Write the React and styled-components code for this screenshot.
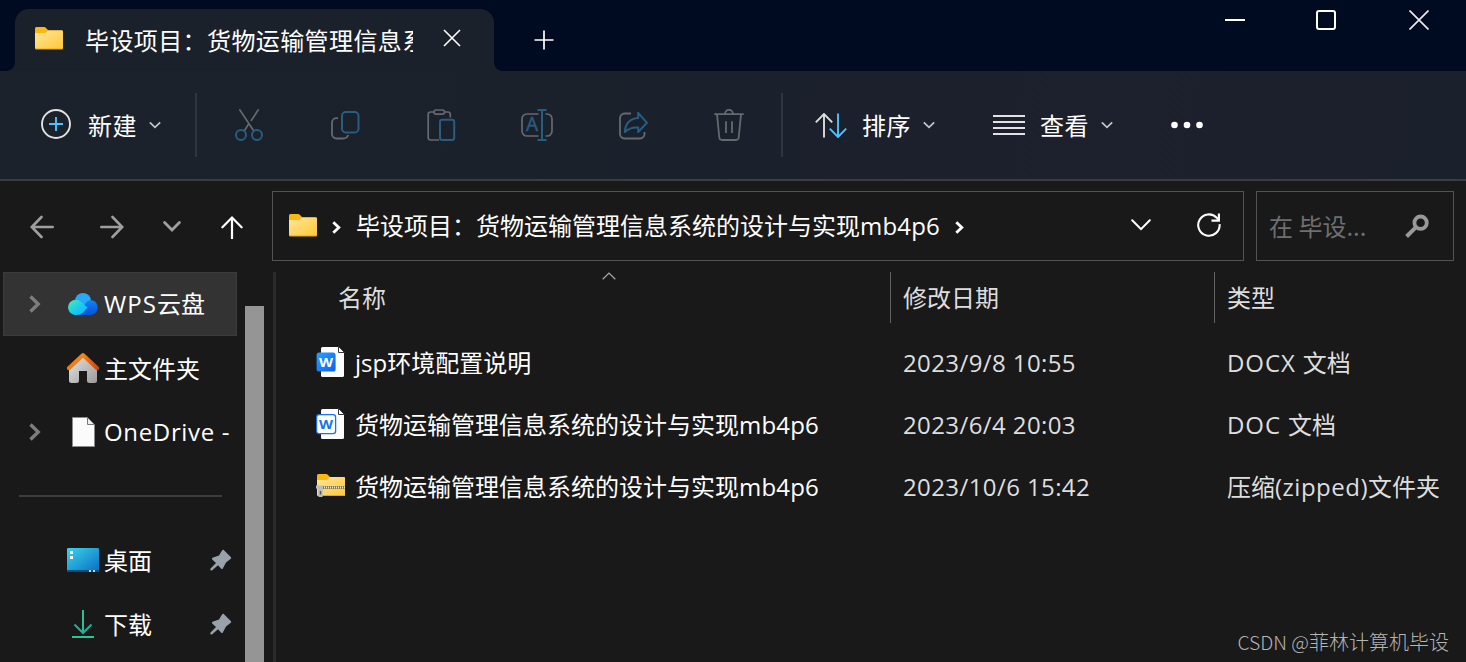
import styled, { createGlobalStyle } from "styled-components";

const places = [
  { label: "云盘", latin: "WPS", icon: "cloud", expandable: true, selected: true },
  { label: "主文件夹", icon: "home" },
  { latin: "OneDrive -", icon: "file", expandable: true },
];

const pinned = [
  { label: "桌面", icon: "desktop" },
  { label: "下载", icon: "download" },
];

const files = [
  { pre: "jsp", name: "环境配置说明", date: "2023/9/8 10:55", typeLatin: "DOCX", type: "文档", icon: "docx" },
  { name: "货物运输管理信息系统的设计与实现", post: "mb4p6", date: "2023/6/4 20:03", typeLatin: "DOC", type: "文档", icon: "doc" },
  { name: "货物运输管理信息系统的设计与实现", post: "mb4p6", date: "2023/10/6 15:42", zip: true, icon: "zip" },
];

export default function App() {
  return (
    <Window>
      <GlobalStyle />
      <TitleBar>
        <Tab>
          <FolderIcon />
          <TabTitle>毕设项目：货物运输管理信息系</TabTitle>
          <Svg width="18" height="18" stroke="#fff" strokeWidth="1.6">
            <path d="M1 1 17 17M17 1 1 17" />
          </Svg>
        </Tab>
        <NewTab>
          <Svg width="20" height="20" stroke="#fff" strokeWidth="1.7">
            <path d="M10 .5V19.5M.5 10H19.5" />
          </Svg>
        </NewTab>
        <WindowButtons>
          <Svg width="20" height="20" stroke="#fff" strokeWidth="2">
            <path d="M0 10H20" />
          </Svg>
          <Svg width="20" height="20" stroke="#fff" strokeWidth="2">
            <rect x="1" y="1" width="18" height="18" rx="2" />
          </Svg>
          <Svg width="20" height="20" stroke="#e8e8ee" strokeWidth="1.7">
            <path d="M.5 .5 19.5 19.5M19.5 .5.5 19.5" />
          </Svg>
        </WindowButtons>
      </TitleBar>

      <CommandBar>
        <MenuButton $left={41}>
          <Svg width="30" height="32" strokeWidth="1.9">
            <circle cx="15" cy="15" r="14" stroke="#e2e2e2" />
            <path d="M15 8V22M8 15H22" stroke="#4cc2ff" />
          </Svg>
          <MenuLabel $gap={17}>新建</MenuLabel>
          <SmallChevron />
        </MenuButton>
        <Divider $left={34} />
        <Actions>
          <Action><CutIcon /></Action>
          <Action><CopyIcon /></Action>
          <Action><PasteIcon /></Action>
          <Action><RenameIcon /></Action>
          <Action><ShareIcon /></Action>
          <Action><DeleteIcon /></Action>
        </Actions>
        <Divider $left={4} />
        <MenuButton $left={32}>
          <Svg width="33" height="25" strokeWidth="1.9">
            <path d="M9 24.5V1M.8 9.3 9 1l8.2 8.3" stroke="#dcdcdc" />
            <path d="M23 .5V24M14.8 15.7 23 24l8.2-8.3" stroke="#4cc2ff" />
          </Svg>
          <MenuLabel $gap={14}>排序</MenuLabel>
          <SmallChevron />
        </MenuButton>
        <MenuButton $left={58}>
          <Svg width="32" height="20" stroke="#e2e2e2" strokeWidth="2">
            <path d="M0 1H32M0 7H32M0 13H32M0 19H32" />
          </Svg>
          <MenuLabel $gap={15}>查看</MenuLabel>
          <SmallChevron />
        </MenuButton>
        <MenuButton $left={58}>
          <Svg width="33" height="8" fill="#fff">
            <circle cx="3.5" cy="4" r="3.3" />
            <circle cx="16" cy="4" r="3.3" />
            <circle cx="28.5" cy="4" r="3.3" />
          </Svg>
        </MenuButton>
      </CommandBar>

      <NavBar>
        <NavButtons>
          <Svg width="24" height="24" stroke="#9f9f9f" strokeWidth="2.6" strokeLinecap="round">
            <path d="M22.7 12H2M11.5 2 1.8 12l9.7 10" />
          </Svg>
          <Svg width="24" height="24" stroke="#9f9f9f" strokeWidth="2.6" strokeLinecap="round">
            <path d="M1.3 12H22M12.5 2l9.7 10-9.7 10" />
          </Svg>
          <Svg width="18" height="24" stroke="#9f9f9f" strokeWidth="2.8" strokeLinecap="round">
            <path d="M1.6 7.6 9 15l7.4-7.4" />
          </Svg>
          <Svg width="22" height="24" stroke="#fff" strokeWidth="2.2" strokeLinecap="round">
            <path d="M11 23.5V2.5M1.4 12.3 11 2.5l9.6 9.8" />
          </Svg>
        </NavButtons>
        <AddressBar>
          <FolderIcon />
          <CrumbChevron />
          <Crumb>
            毕设项目：货物运输管理信息系统的设计与实现<Latin $spacing={0.2}>mb4p6</Latin>
          </Crumb>
          <CrumbChevron />
          <AddressActions>
            <Svg width="20" height="12" stroke="#fff" strokeWidth="2" strokeLinecap="round">
              <path d="M1.2 1.3 10 10.2l8.8-8.9" />
            </Svg>
            <Svg width="24" height="24" stroke="#fff" strokeWidth="2.1">
              <path d="M22.6 11.2A10.7 10.7 0 1 1 19.8 4.8L22 7.3" />
              <path d="M21.9 .5V7.6H14.5" />
            </Svg>
          </AddressActions>
        </AddressBar>
        <SearchBox>
          <span>在 毕设...</span>
          <Svg width="24" height="24" stroke="#999" strokeWidth="3.8">
            <circle cx="15.6" cy="8.7" r="6.2" />
            <path d="M11 13.1 1.6 22.5" strokeWidth="4" />
          </Svg>
        </SearchBox>
      </NavBar>

      <Body>
        <Sidebar>
          {places.map((place) => (
            <Place key={place.icon} $selected={place.selected}>
              <Expander>{place.expandable && <PlaceChevron />}</Expander>
              <PlaceIcon name={place.icon} />
              <PlaceLabel>
                {place.latin && <Latin $spacing={place.label ? 1.1 : 0.65}>{place.latin}</Latin>}
                {place.label}
              </PlaceLabel>
            </Place>
          ))}
          <Separator />
          {pinned.map((place) => (
            <Place key={place.icon}>
              <Expander />
              <PlaceIcon name={place.icon} />
              <PlaceLabel>{place.label}</PlaceLabel>
              <PinIcon />
            </Place>
          ))}
        </Sidebar>
        <ScrollTrack>
          <ScrollThumb />
        </ScrollTrack>
        <Splitter />

        <Content>
          <HeaderRow>
            <HeaderCell $pad={62}>
              名称
              <SortMark>
                <Svg width="14" height="8" stroke="#aaa" strokeWidth="1.2">
                  <path d="M.7 7.2 7 1l6.3 6.2" />
                </Svg>
              </SortMark>
            </HeaderCell>
            <HeaderCell $pad={12}>修改日期</HeaderCell>
            <HeaderCell $pad={12}>类型</HeaderCell>
          </HeaderRow>
          {files.map((file) => (
            <FileRow key={file.icon}>
              <FileName>
                <FileIcon name={file.icon} />
                <span>
                  {file.pre && <Latin>{file.pre}</Latin>}
                  {file.name}
                  {file.post && <Latin $spacing={0.2}>{file.post}</Latin>}
                </span>
              </FileName>
              <FileMeta>
                <Latin $spacing={0.4}>{file.date}</Latin>
              </FileMeta>
              <FileMeta>
                {file.zip ? (
                  <>
                    压缩<Latin $spacing={0.5}>(zipped)</Latin>文件夹
                  </>
                ) : (
                  <>
                    <Latin $spacing={0.9}>{file.typeLatin} </Latin>
                    {file.type}
                  </>
                )}
              </FileMeta>
            </FileRow>
          ))}
        </Content>
      </Body>
      <Watermark>
        <small>CSDN @</small>菲林计算机毕设
      </Watermark>
    </Window>
  );
}

function FolderIcon() {
  return (
    <Svg width="28" height="23">
      <defs>
        <linearGradient id="folder" x1="0" y1="0" x2="1" y2="1">
          <stop offset="0" stopColor="#ffe69b" />
          <stop offset="1" stopColor="#ffc937" />
        </linearGradient>
      </defs>
      <path d="M0 1.5Q0 0 1.5 0H9q1.2 0 2 1L13.5 3.5H26.5Q28 3.5 28 5V12H0Z" fill="#fcb613" />
      <path d="M0 6H10L13 3.5H26.8Q28 3.5 28 4.7V21.3Q28 22.5 26.8 22.5H1.2Q0 22.5 0 21.3Z" fill="#e5a31a" />
      <path d="M0 6H10L13 3.5H26.8Q28 3.5 28 4.7V20.3Q28 21.5 26.8 21.5H1.2Q0 21.5 0 20.3Z" fill="url(#folder)" />
    </Svg>
  );
}

function SmallChevron() {
  return (
    <Svg width="12" height="8" stroke="#c4c6ca" strokeWidth="1.7">
      <path d="M.8 1.3 6 6.3l5.2-5" />
    </Svg>
  );
}

function CrumbChevron() {
  return (
    <ChevronSlot>
      <Svg width="9" height="13" stroke="#fff" strokeWidth="2.8">
        <path d="M1.3 1.2 6.8 6.5 1.3 11.8" />
      </Svg>
    </ChevronSlot>
  );
}

function PlaceChevron() {
  return (
    <Svg width="12" height="18" stroke="#7d7d7d" strokeWidth="3.4">
      <path d="M1.5 1.5 9.2 9 1.5 16.5" />
    </Svg>
  );
}

function CutIcon() {
  return (
    <Svg width="32" height="32" stroke="#66696f" strokeWidth="1.7">
      <path d="M6.4 .3 21 22.2M25.6 .3 18 12M15.5 15.3 11 22.2" />
      <g stroke="#275d80" strokeWidth="2">
        <circle cx="8" cy="26" r="5" />
        <circle cx="24" cy="26" r="5" />
      </g>
    </Svg>
  );
}

function CopyIcon() {
  return (
    <Svg width="32" height="32" stroke="#66696f" strokeWidth="1.8">
      <path d="M9 9.2H7.5A4.5 4.5 0 0 0 3 13.5V25a4.5 4.5 0 0 0 4.5 4.5H14q4 0 5.2-3.5" />
      <rect x="13" y="3" width="16.5" height="20.5" rx="3.8" stroke="#275d80" strokeWidth="2" />
    </Svg>
  );
}

function PasteIcon() {
  return (
    <Svg width="32" height="32" stroke="#66696f" strokeWidth="1.7">
      <path d="M14 31H5.5A2.5 2.5 0 0 1 3.2 28.5V5.5Q3.2 3 5.5 3H9M20 3h3q2.3 0 2.3 2.5V8.5" />
      <rect x="9" y="1" width="10.5" height="4.2" rx="2.1" />
      <rect x="15" y="10.8" width="14.2" height="20.2" rx="2.2" stroke="#275d80" strokeWidth="2" />
    </Svg>
  );
}

function RenameIcon() {
  return (
    <Svg width="32" height="32" stroke="#66696f" strokeWidth="1.7">
      <path d="M17.5 5H6A5 5 0 0 0 1 10V22a5 5 0 0 0 5 5H17.5M24.5 5H26a5 5 0 0 1 5 5V22a5 5 0 0 1-5 5h-1.5" />
      <path d="M21 1V31M16.5 1h9M16.5 31h9" stroke="#275d80" strokeWidth="2" />
      <text x="11.2" y="22" textAnchor="middle" fill="#275d80" stroke="#275d80" strokeWidth=".4" fontSize="19" fontFamily="Noto Sans">
        A
      </text>
    </Svg>
  );
}

function ShareIcon() {
  return (
    <Svg width="32" height="32" stroke="#66696f" strokeWidth="1.8">
      <path d="M14 4.5H7.5A4.5 4.5 0 0 0 3 9V25a4.5 4.5 0 0 0 4.5 4.5H23A4.5 4.5 0 0 0 27.5 25V23" />
      <path
        d="M21.2 3.8 30 13.8 21.2 23V18.5C15.5 18 11.5 19.5 7.8 23 8.5 14.5 13 9.5 21.2 9Z"
        stroke="#275d80"
        strokeWidth="2"
        strokeLinejoin="round"
      />
    </Svg>
  );
}

function DeleteIcon() {
  return (
    <Svg width="32" height="32" stroke="#66696f" strokeWidth="1.8">
      <path d="M1.3 5.2H30.7M12 5.2a4 4.4 0 0 1 8 0M4 5.2 6.3 28.5Q6.6 31 9 31H23q2.4 0 2.7-2.5L28 5.2M13 12.3V24M19 12.3V24" />
    </Svg>
  );
}

function PlaceIcon({ name }) {
  switch (name) {
    case "cloud":
      return (
        <Svg width="32" height="32">
          <defs>
            <linearGradient id="cloudLeft" x1="0" y1="0" x2="1" y2="1">
              <stop offset="0" stopColor="#4fe9b0" />
              <stop offset=".6" stopColor="#12c9f5" />
              <stop offset="1" stopColor="#1fb4ff" />
            </linearGradient>
            <linearGradient id="cloudRight" x1="0" y1="0" x2="0" y2="1">
              <stop offset="0" stopColor="#1480f5" />
              <stop offset="1" stopColor="#0353d6" />
            </linearGradient>
          </defs>
          <circle cx="16" cy="13" r="8" fill="#27a9fb" />
          <path d="M10 27 20 13.5Q23 11.5 26 12.5A7.6 7.6 0 0 1 24 27Z" fill="url(#cloudRight)" />
          <path d="M8.5 27A7.6 7.6 0 1 1 13.5 13.5L20.5 19.5 16 24.5Q13.5 27 8.5 27Z" fill="url(#cloudLeft)" />
        </Svg>
      );
    case "home":
      return (
        <Svg width="32" height="32">
          <defs>
            <linearGradient id="wall" x1="0" y1="0" x2="1" y2="1">
              <stop offset="0" stopColor="#e4e4e4" />
              <stop offset="1" stopColor="#9b9b9b" />
            </linearGradient>
            <linearGradient id="roof" x1="0" y1="0" x2="1" y2="0">
              <stop offset="0" stopColor="#f07a13" />
              <stop offset=".5" stopColor="#f38516" />
              <stop offset="1" stopColor="#d94406" />
            </linearGradient>
          </defs>
          <path d="M2 16 16 3.5 30 16V28.5Q30 31 27.5 31H22.5Q20 31 20 28.5V19H12V28.5Q12 31 9.5 31H4.5Q2 31 2 28.5Z" fill="url(#wall)" />
          <path d="M1.8 16.2 16 3 30.2 16.2" stroke="url(#roof)" strokeWidth="4" strokeLinejoin="round" strokeLinecap="round" />
        </Svg>
      );
    case "file":
      return (
        <Svg width="32" height="32">
          <path d="M5.5 1.5H20.5L27.5 8.5V30.5H5.5Z" fill="#fbfbfb" stroke="#8a8a8a" />
          <path d="M20.5 1.5V8.5H27.5Z" fill="#ededed" stroke="#777" />
        </Svg>
      );
    case "desktop":
      return (
        <Svg width="32" height="32">
          <defs>
            <linearGradient id="screen" x1="0" y1="0" x2="1" y2="1">
              <stop offset="0" stopColor="#38d5ea" />
              <stop offset="1" stopColor="#0c6cc4" />
            </linearGradient>
          </defs>
          <rect y="4" width="32" height="24" rx="1.3" fill="url(#screen)" />
          <path d="M0 26H32V27Q32 28 31 28H1Q0 28 0 27Z" fill="#095083" />
          <path d="M3 7h3v3H3ZM3 12h3v3H3Z" fill="#fff" />
          <path d="M22 26h2v2h-2ZM26 26h2v2h-2Z" fill="#bcd3e6" />
        </Svg>
      );
    default:
      return (
        <Svg width="32" height="32" strokeWidth="2">
          <path d="M16 2V24.5" stroke="#2fbf90" />
          <path d="M7.5 16.5 16 25l8.5-8.5" stroke="#23ae97" />
          <path d="M5 29H27" stroke="#2fc593" />
        </Svg>
      );
  }
}

function PinIcon() {
  return (
    <Pin width="22" height="22">
      <path d="M13.5 .8 21 8.3q.6 1-.5 1.7L16 13.5 12.8 19.5Q12 20.5 11 19.5L8 16.3 2 21.5.3 21.3.5 19.5 6 14 2.2 10.5Q1.5 9.5 2.5 8.8L9 6.5 12.2 1.3Q12.8.3 13.5.8Z" fill="#97a2aa" />
    </Pin>
  );
}

function FileIcon({ name }) {
  if (name === "zip") {
    return (
      <Svg width="30" height="32">
        <path d="M1 5.5Q1 4 2.5 4H10q1.3 0 2 1L14 7H27.5Q29 7 29 8.5V15H1Z" fill="#fcb613" />
        <path d="M1 10H11L14 7H28Q29 7 29 8V25Q29 26 28 26H2Q1 26 1 25Z" fill="url(#folder)" />
        <path d="M1 25.5H29" stroke="#e5a31a" />
        <path d="M7 17.5H29" stroke="#8c7a4a" strokeWidth="3" />
        <path d="M8 17.5H29" stroke="#f3e7bd" strokeWidth="2" strokeDasharray="1 1" />
        <path d="M0 15.5H7V19L6.5 27H2.5L2 19 0 18.5Z" fill="#bdbdbd" />
        <path d="M4.5 21V24.5" stroke="#555" strokeWidth="1.5" />
      </Svg>
    );
  }
  const filled = name === "docx";
  return (
    <Svg width="30" height="32">
      <defs>
        <linearGradient id="writer" x1="0" y1="0" x2="1" y2="1">
          <stop offset="0" stopColor="#27a0ff" />
          <stop offset="1" stopColor="#0a62f6" />
        </linearGradient>
      </defs>
      <path d="M6.5 1H22L28 7V29.5Q28 31 26.5 31H6.5Q5 31 5 29.5V2.5Q5 1 6.5 1Z" fill="#fdfdfd" />
      <path d="M22.5 .5V6.5H28.5Z" fill="#fff" stroke="#33373d" />
      <rect x=".6" y="6.6" width="19" height="19" rx="2.6" fill={filled ? "url(#writer)" : "#fff"} stroke={filled ? "none" : "#1671f5"} strokeWidth="1.3" />
      <text
        x="10"
        y="20.5"
        textAnchor="middle"
        textLength="14"
        lengthAdjust="spacingAndGlyphs"
        fontSize="13"
        fontWeight="700"
        fontFamily="Noto Sans"
        fill={filled ? "#fff" : "#1671f5"}
      >
        W
      </text>
    </Svg>
  );
}

const GlobalStyle = createGlobalStyle`
  body {
    margin: 0;
    background: #191919;
  }
`;

const Window = styled.div`
  position: relative;
  display: flex;
  flex-direction: column;
  height: 662px;
  overflow: hidden;
  background: #191919;
  color: #fff;
  font-family: "Noto Sans CJK SC", sans-serif;
  font-size: 24px;
  font-weight: 400;
  line-height: 32px;
  white-space: nowrap;
`;

const Svg = styled.svg.attrs((props) => ({ fill: props.fill || "none" }))`
  display: block;
  flex: none;
`;

const Latin = styled.span`
  font-family: "Open Sans", "Noto Sans", sans-serif;
  letter-spacing: ${(props) => props.$spacing || 0}px;
`;

const TitleBar = styled.div`
  display: flex;
  height: 71px;
  flex: none;
  background: #000a20;
`;

const Tab = styled.div`
  position: relative;
  display: flex;
  align-items: center;
  box-sizing: border-box;
  width: 479px;
  height: 62px;
  margin: 9px 0 0 15px;
  padding: 0 0 4px 20px;
  border-radius: 14px 14px 0 0;
  background: #1b212b;

  /* flared corners where the tab meets the command bar */
  &::before,
  &::after {
    content: "";
    position: absolute;
    bottom: 0;
    width: 8px;
    height: 8px;
  }

  &::before {
    left: -8px;
    background: radial-gradient(circle at 0 0, transparent 7.5px, #1b212b 8px);
  }

  &::after {
    right: -8px;
    background: radial-gradient(circle at 100% 0, transparent 7.5px, #1b212b 8px);
  }
`;

const TabTitle = styled.div`
  width: 328px;
  margin: 3px 30px 0 22px;
  overflow: hidden;
  letter-spacing: 0.4px;
`;

const NewTab = styled.div`
  padding: 30px 0 0 40px;
`;

const WindowButtons = styled.div`
  display: flex;
  gap: 71px;
  margin-left: auto;
  padding: 10px 37px 0 0;

  svg:last-child {
    margin-left: 2px;
  }
`;

const CommandBar = styled.div`
  display: flex;
  align-items: center;
  height: 108px;
  flex: none;
  background: linear-gradient(100deg, #1b222b, #1b202d);
  border-bottom: 2px solid #3c3c3d;
`;

const MenuButton = styled.div`
  display: flex;
  align-items: center;
  margin-left: ${(props) => props.$left}px;
`;

const MenuLabel = styled.span`
  width: 49px;
  margin: 0 12px 0 ${(props) => props.$gap}px;
  letter-spacing: 0.6px;
`;

const Divider = styled.div`
  width: 2px;
  height: 64px;
  margin-left: ${(props) => props.$left}px;
  background: #30353f;
`;

const Actions = styled.div`
  display: flex;
  padding-left: 4px;
`;

const Action = styled.div`
  display: flex;
  justify-content: center;
  width: 96px;
`;

const NavBar = styled.div`
  display: flex;
  height: 70px;
  flex: none;
  padding: 10px 12px 11px 0;
`;

const NavButtons = styled.div`
  display: flex;
  align-items: center;
  box-sizing: border-box;
  width: 272px;
  padding: 2px 0 0 30px;

  svg + svg {
    margin-left: 46px;
  }

  svg + svg + svg {
    margin-left: 39px;
  }

  svg + svg + svg + svg {
    margin-left: 40px;
  }
`;

const AddressBar = styled.div`
  display: flex;
  align-items: center;
  box-sizing: border-box;
  width: 972px;
  padding: 0 0 2px 16px;
  border: 1px solid #535353;
`;

const ChevronSlot = styled.span`
  margin: 4px 0 0 15px;
`;

const Crumb = styled.div`
  margin-left: 15px;
`;

const AddressActions = styled.div`
  display: flex;
  align-items: center;
  gap: 46px;
  margin: 0 22px 0 auto;
`;

const SearchBox = styled.div`
  display: flex;
  align-items: center;
  justify-content: space-between;
  box-sizing: border-box;
  width: 198px;
  margin-left: 12px;
  padding: 0 24px 1px 12px;
  border: 1px solid #535353;
  color: #6f6f6f;
`;

const Body = styled.div`
  display: flex;
  flex: 1;
  min-height: 0;
`;

const Sidebar = styled.div`
  width: 245px;
  flex: none;
`;

const Place = styled.div`
  display: flex;
  align-items: center;
  box-sizing: border-box;
  width: 234px;
  height: 64px;
  margin-left: 3px;
  border: 1px solid ${(props) => (props.$selected ? "#3b3b3b" : "transparent")};
  background: ${(props) => (props.$selected ? "#333" : "transparent")};
`;

const Expander = styled.div`
  box-sizing: border-box;
  width: 63px;
  padding-left: 25px;
`;

const PlaceLabel = styled.div`
  margin: 0 0 1px 5px;
`;

const Pin = styled(Svg)`
  margin-left: auto;
  margin-right: 4px;
`;

const Separator = styled.div`
  height: 2px;
  width: 203px;
  margin: 31px 0 31px 19px;
  background: #3c3c3c;
`;

const ScrollTrack = styled.div`
  width: 19px;
  flex: none;
  padding-top: 34px;
`;

const ScrollThumb = styled.div`
  height: 100%;
  background: #959595;
`;

const Splitter = styled.div`
  width: 3px;
  flex: none;
  margin-left: 9px;
  background: #2b2b2b;
`;

const Content = styled.div`
  flex: 1;
`;

const HeaderRow = styled.div`
  display: grid;
  grid-template-columns: 614px 324px 1fr;
  height: 51px;
  margin-bottom: 8px;
`;

const HeaderCell = styled.div`
  position: relative;
  display: flex;
  align-items: center;
  padding: 0 0 1px ${(props) => props.$pad}px;
  color: #dedede;

  & + & {
    border-left: 1px solid #636363;
  }
`;

const SortMark = styled.span`
  position: absolute;
  top: 0;
  left: 326px;
`;

const FileRow = styled.div`
  display: grid;
  grid-template-columns: 614px 324px 1fr;
  align-items: center;
  height: 62px;
`;

const FileName = styled.div`
  display: flex;
  align-items: center;
  gap: 9px;
  padding-left: 40px;
`;

const FileMeta = styled.div`
  padding-left: 13px;
  color: #dedede;
`;

const Watermark = styled.div`
  position: absolute;
  right: 17px;
  bottom: 4px;
  color: #b4b4b4;
  font-size: 20px;
  font-weight: 300;

  small {
    font-size: 19.4px;
  }
`;
